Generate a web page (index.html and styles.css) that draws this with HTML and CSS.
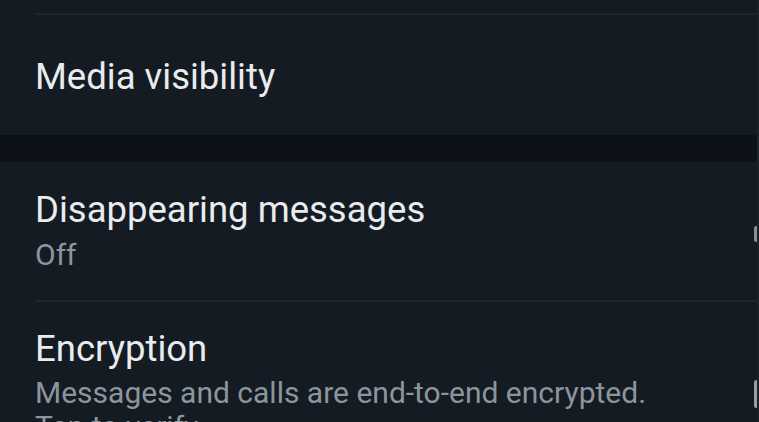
FILE: index.html
```html
<!DOCTYPE html>
<html>
<head>
<meta charset="utf-8">
<link rel="stylesheet" href="styles.css">
</head>
<body>
<div class="screen">
  <div class="top-stub"></div>
  <div class="divider"></div>
  <div class="row row-media">
    <div class="title">Media visibility</div>
  </div>
  <div class="section-gap"></div>
  <div class="row row-disappear">
    <div class="title">Disappearing messages</div>
    <div class="subtitle">Off</div>
    <span class="edge-icon edge-icon-a"></span>
  </div>
  <div class="divider"></div>
  <div class="row row-encrypt">
    <div class="title">Encryption</div>
    <div class="subtitle">Messages and calls are end-to-end encrypted.<br>Tap to verify.</div>
    <span class="edge-icon edge-icon-b"></span>
  </div>
</div>
</body>
</html>
```
FILE: styles.css
```css
html, body {
  margin: 0;
  padding: 0;
  background: #151b22;
  overflow: hidden;
}
.screen {
  width: 759px;
  height: 422px;
  overflow: hidden;
  font-family: Roboto, "Noto Sans", sans-serif;
  background: #151b22;
  border-right: 2px solid #1c232a;
  box-sizing: border-box;
}
.top-stub {
  height: 13px;
}
.divider {
  height: 2px;
  margin-left: 35px;
  background: #1f272e;
}
.row {
  position: relative;
  padding-left: 35px;
}
.title {
  color: #e8ecee;
  font-size: 36.5px;
  line-height: 44px;
}
.subtitle {
  color: #8a969e;
  font-size: 30px;
  line-height: 34px;
}
.row-media {
  padding-top: 40px;
  padding-bottom: 36px;
}
.section-gap {
  height: 27px;
  background: #0d1218;
}
.row-disappear {
  padding-top: 26px;
  padding-bottom: 28px;
}
.row-disappear .subtitle {
  margin-top: 6px;
}
.row-encrypt {
  padding-top: 25px;
}
.row-encrypt .subtitle {
  margin-top: 5px;
}
.edge-icon {
  position: absolute;
  right: -2px;
  width: 5px;
  background: #b9c2c7;
  border-radius: 3px;
}
.edge-icon-a {
  top: 64px;
  height: 16px;
  opacity: 0.7;
}
.edge-icon-b {
  top: 78px;
  height: 28px;
  opacity: 0.8;
}
```
